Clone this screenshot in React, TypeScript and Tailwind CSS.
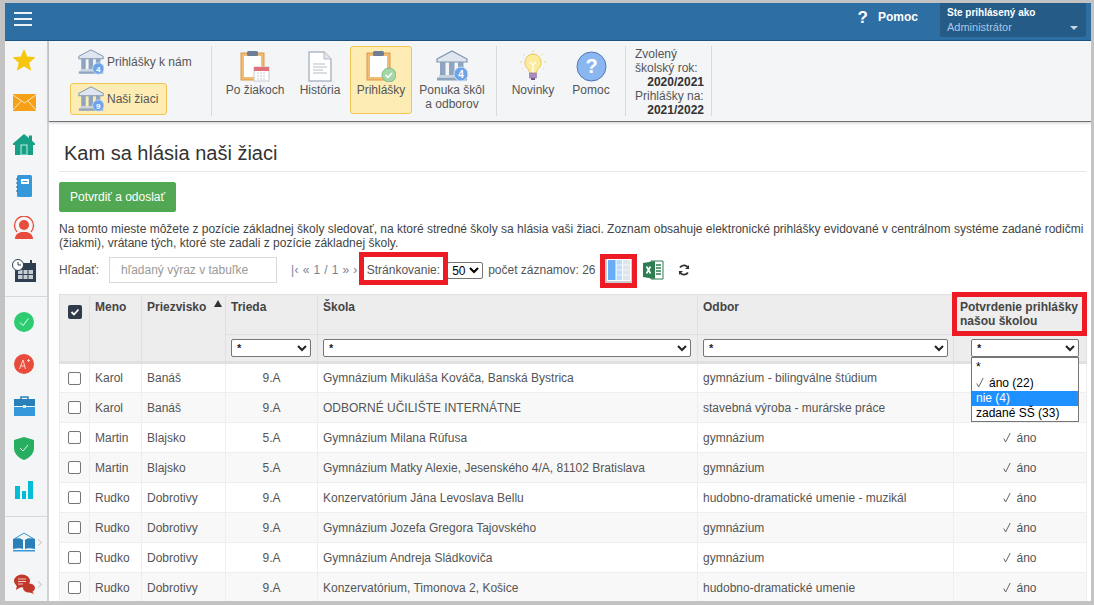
import type { ReactNode } from "react";

type Row = { first: string; last: string; cls: string; school: string; field: string };

const rows: Row[] = [
  { first: "Karol", last: "Banáš", cls: "9.A", school: "Gymnázium Mikuláša Kováča, Banská Bystrica", field: "gymnázium - bilingválne štúdium" },
  { first: "Karol", last: "Banáš", cls: "9.A", school: "ODBORNÉ UČILIŠTE INTERNÁTNE", field: "stavebná výroba - murárske práce" },
  { first: "Martin", last: "Blajsko", cls: "5.A", school: "Gymnázium Milana Rúfusa", field: "gymnázium" },
  { first: "Martin", last: "Blajsko", cls: "5.A", school: "Gymnázium Matky Alexie, Jesenského 4/A, 81102 Bratislava", field: "gymnázium" },
  { first: "Rudko", last: "Dobrotivy", cls: "9.A", school: "Konzervatórium Jána Levoslava Bellu", field: "hudobno-dramatické umenie - muzikál" },
  { first: "Rudko", last: "Dobrotivy", cls: "9.A", school: "Gymnázium Jozefa Gregora Tajovského", field: "gymnázium" },
  { first: "Rudko", last: "Dobrotivy", cls: "9.A", school: "Gymnázium Andreja Sládkoviča", field: "gymnázium" },
  { first: "Rudko", last: "Dobrotivy", cls: "9.A", school: "Konzervatórium, Timonova 2, Košice", field: "hudobno-dramatické umenie" },
];

function Bank({ badge, size = 26 }: { badge: string; size?: number }) {
  return (
    <svg width={size} height={size} viewBox="0 0 32 32">
      <path d="M1 9 16 1l15 8v3H1z" fill="#dfe6ef" stroke="#7f93ad" strokeWidth="1.200" />
      <rect x="4" y="12" width="5.500" height="13" fill="#8fa4bf" />
      <rect x="13" y="12" width="5.500" height="13" fill="#8fa4bf" />
      <rect x="22" y="12" width="5.500" height="13" fill="#8fa4bf" />
      <rect x="3" y="25" width="26" height="2" fill="#c7d2df" />
      <rect x="1" y="27.500" width="30" height="3" fill="#8fa4bf" />
      <circle cx="25" cy="24" r="7" fill="#6ea3e8" stroke="#cfe0f7" strokeWidth="1" />
      <text x="25" y="28" textAnchor="middle" fontSize="10" fontWeight="700" fill="#fff" fontFamily="Liberation Sans">
        {badge}
      </text>
    </svg>
  );
}

function Clipboard({ children }: { children: ReactNode }) {
  return (
    <svg width="30" height="32" viewBox="0 0 30 32">
      <rect x="1" y="3" width="23" height="27" fill="#f2bd72" stroke="#d99a4a" />
      <rect x="4" y="6" width="17" height="21" fill="#fff" />
      <rect x="7" y="1" width="11" height="5" rx="1.500" fill="#6d7f96" />
      {children}
    </svg>
  );
}

function Check() {
  return (
    <svg className="mr-[5px] inline-block align-[-1px]" width="8" height="11" viewBox="0 0 8 11">
      <path d="M.8 6.500 2.600 10 7.200 1" fill="none" stroke="#666" strokeWidth="1" />
    </svg>
  );
}

function SideIcon({ children }: { children: ReactNode }) {
  return <div className="flex h-8 items-center justify-center pr-[4px]">{children}</div>;
}

function RibbonItem({ icon, label, active, width }: { icon: ReactNode; label: ReactNode; active?: boolean; width: string }) {
  return (
    <div
      className={`flex h-[68px] flex-col items-center rounded-[3px] border pt-[3px] text-center leading-[14px] whitespace-nowrap ${width} ${
        active ? "border-[#f3c552] bg-[#fdedb4]" : "border-transparent"
      }`}
    >
      <div className="flex h-[32px] items-center justify-center">{icon}</div>
      <div className="mt-[1px]">{label}</div>
    </div>
  );
}

function FilterSelect({ width }: { width: string }) {
  return (
    <select className={`h-[18px] rounded-[2px] border border-[#767676] bg-white pl-[1px] text-[11px] leading-[14px] text-[#222] ${width}`}>
      <option>*</option>
    </select>
  );
}

export default function App() {
  return (
    <div className="h-[605px] w-[1094px] overflow-hidden bg-[#c3c3c3] pb-[4px] pl-[5px] pr-[3px] pt-[3px] font-['Liberation_Sans',Arial,sans-serif] text-[12px] text-[#555]">
      <div className="relative flex h-full flex-col overflow-hidden bg-white">
        <header className="flex h-[38px] shrink-0 items-start justify-between border-b border-[#1d5583] bg-[#2d6ea3]">
          <div className="mt-[9px] ml-[9px] flex w-[18px] flex-col gap-[4px]">
            <span className="h-[2px] bg-[#e9f1f8]" />
            <span className="h-[2px] bg-[#e9f1f8]" />
            <span className="h-[2px] bg-[#e9f1f8]" />
          </div>
          <div className="mr-[5px] flex items-start">
            <span className="mt-[5px] text-[17px] font-bold leading-[20px] text-white">?</span>
            <span className="ml-[10px] mt-[7px] mr-[22px] text-[12px] font-bold leading-[14px] text-white">Pomoc</span>
            <div className="relative h-[34px] w-[146px] rounded-b-[2px] bg-[#255c87] pl-[7px] pt-[3px]">
              <div className="text-[10px] font-bold leading-[13px] text-white">Ste prihlásený ako</div>
              <div className="mt-[2px] text-[11px] leading-[13px] text-[#a9c6e6]">Administrátor</div>
              <span className="absolute bottom-[7px] right-[8px] h-0 w-0 border-x-[4px] border-t-[4px] border-x-transparent border-t-[#c9d6e2]" />
            </div>
          </div>
        </header>

        <div className="flex min-h-0 flex-1">
          <aside className="flex w-[44px] shrink-0 flex-col border-r-2 border-[#d0d2d5] bg-[#f4f5f7] pt-[3px]">
            <div className="flex flex-col gap-[10px]">
              <SideIcon>
                <svg width="24" height="22" viewBox="0 0 24 22"><path d="M12 0l3.300 7.600 8.200.7-6.200 5.400 1.900 8L12 17.400 4.800 21.700l1.900-8L.5 8.300l8.200-.7z" fill="#f5c80f" /></svg>
              </SideIcon>
              <SideIcon>
                <svg width="23" height="17" viewBox="0 0 23 17"><rect width="23" height="17" fill="#f7a015" /><path d="M0 1l11.500 8L23 1M0 16l8-9M23 16l-8-9" fill="none" stroke="#fde6bd" strokeWidth="1" /></svg>
              </SideIcon>
              <SideIcon>
                <svg width="22" height="21" viewBox="0 0 22 21"><path d="M11 0l5 4V1.500h3v5.200L22 9.500V11h-2v10H2V11H0V9.500z" fill="#16a085" /><rect x="8" y="11" width="6" height="10" fill="none" stroke="#bfeee3" strokeWidth="1" /></svg>
              </SideIcon>
              <SideIcon>
                <svg width="16" height="22" viewBox="0 0 16 22"><rect x="1" width="15" height="22" rx="1.500" fill="#3498db" /><rect x="5" y="4" width="8" height="5" fill="#fff" /><rect x="6.500" y="6" width="5" height="1" fill="#3498db" /><path d="M0 4h2M0 8h2M0 12h2M0 16h2" stroke="#1f6da8" strokeWidth="1" /></svg>
              </SideIcon>
              <SideIcon>
                <svg width="22" height="24" viewBox="0 0 22 24"><path d="M4 16a9.500 9.500 0 1 1 14 0" fill="none" stroke="#e74c3c" strokeWidth="1.300" /><circle cx="11" cy="9" r="5" fill="#e74c3c" /><path d="M2 23c0-5 4-6 6-7h6c2 1 6 2 6 7z" fill="#e74c3c" /></svg>
              </SideIcon>
              <SideIcon>
                <svg width="24" height="23" viewBox="0 0 24 23"><rect x="3" y="4" width="21" height="19" fill="#2c3e50" /><rect x="6" y="11" width="15" height="9" fill="#c5ccd3" /><path d="M11 11v9M16 11v9M6 15.500h15" stroke="#2c3e50" /><circle cx="6" cy="6" r="5.500" fill="#fff" stroke="#2c3e50" /><path d="M6 3v3h3" fill="none" stroke="#2c3e50" /><rect x="18" y="1" width="2" height="5" fill="#2c3e50" /></svg>
              </SideIcon>
            </div>
            <div className="mb-[9px] mt-[10px] h-px bg-[#d6d8da]" />
            <div className="flex flex-col gap-[10px]">
              <SideIcon>
                <svg width="20" height="20" viewBox="0 0 20 20"><circle cx="10" cy="10" r="10" fill="#2ecc71" /><path d="M6 10.500l3 3 5.500-7" fill="none" stroke="#e6fff0" strokeWidth="1" /></svg>
              </SideIcon>
              <SideIcon>
                <svg width="20" height="20" viewBox="0 0 20 20"><circle cx="10" cy="10" r="10" fill="#e74c3c" /><path d="M5.500 15 9 6l2.500 9M6.800 12h4M13 6.500h3M14.500 5v3" fill="none" stroke="#fbd5d0" strokeWidth="1" /></svg>
              </SideIcon>
              <SideIcon>
                <svg width="21" height="20" viewBox="0 0 21 20"><path d="M7 3V1h7v2" fill="none" stroke="#2980b9" strokeWidth="1.500" /><rect y="3" width="21" height="7" fill="#2980b9" /><rect y="11" width="21" height="9" fill="#3498db" /><rect x="9" y="9" width="3" height="3" fill="#d7ecfa" /></svg>
              </SideIcon>
              <SideIcon>
                <svg width="20" height="23" viewBox="0 0 20 23"><path d="M10 0l10 3v8c0 6-5 10-10 12C5 21 0 17 0 11V3z" fill="#27ae60" /><path d="M6 11l3 3 5-6" fill="none" stroke="#dff7e9" strokeWidth="1" /></svg>
              </SideIcon>
              <SideIcon>
                <svg width="18" height="18" viewBox="0 0 18 18"><rect y="5" width="5" height="13" fill="#00bcd4" /><rect x="7" y="10" width="4" height="8" fill="#00bcd4" /><rect x="13" width="5" height="18" fill="#00bcd4" /></svg>
              </SideIcon>
            </div>
            <div className="mb-[9px] mt-[10px] h-px bg-[#d6d8da]" />
            <div className="flex flex-col gap-[10px]">
              <SideIcon>
                <div className="ml-[6px] flex items-center">
                  <svg width="22" height="20" viewBox="0 0 22 20"><path d="M1 7l10-6 10 6" fill="none" stroke="#3498db" strokeWidth="1" /><path d="M0 7c4-1 8-1 10 1v9c-2-1-6-1-10 0zM22 7c-4-1-8-1-10 1v9c2-1 6-1 10 0z" fill="#2980b9" /><rect y="18" width="22" height="1.500" fill="#3498db" /></svg>
                  <span className="ml-[1px] h-[5px] w-[5px] rotate-45 border-r border-t border-[#ccc]" />
                </div>
              </SideIcon>
              <SideIcon>
                <div className="ml-[6px] flex items-center">
                  <svg width="21" height="20" viewBox="0 0 21 20"><ellipse cx="8" cy="7" rx="8" ry="6.500" fill="#c0392b" /><path d="M3 11l-1 5 5-3z" fill="#c0392b" /><path d="M4 5h8M4 7.500h8M4 10h5" stroke="#f3c8c3" /><ellipse cx="15" cy="14" rx="6" ry="4.500" fill="#c0392b" /><path d="M18 17l2 3-5-2z" fill="#c0392b" /></svg>
                  <span className="ml-[1px] h-[5px] w-[5px] rotate-45 border-r border-t border-[#ccc]" />
                </div>
              </SideIcon>
            </div>
          </aside>

          <div className="flex min-w-0 flex-1 flex-col">
            <div className="flex h-[81px] shrink-0 items-start border-b border-[#6f7276] bg-[#f4f5f7] pt-[5px] shadow-[0_1px_3px_rgba(0,0,0,0.2)]">
              <div className="flex h-[70px] w-[163px] shrink-0 flex-col border-r border-[#d8dadd] pl-[21px]">
                <div className="mt-[1px] flex h-[30px] items-center gap-[3px] pl-[8px]">
                  <Bank badge="4" />
                  <span className="whitespace-nowrap">Prihlášky k nám</span>
                </div>
                <div className="mt-[6px] flex h-[32px] w-[97px] items-center gap-[3px] rounded-[3px] border border-[#f3c552] bg-[#fdedb4] pl-[7px]">
                  <Bank badge="9" />
                  <span className="whitespace-nowrap">Naši žiaci</span>
                </div>
              </div>
              <div className="flex h-[70px] w-[285px] shrink-0 items-start border-r border-[#d8dadd] pl-[10px]">
                <RibbonItem
                  width="w-[66px]"
                  label="Po žiakoch"
                  icon={
                    <Clipboard>
                      <rect x="14" y="17" width="15" height="14" fill="#fff" stroke="#c5ccd3" />
                      <rect x="14" y="17" width="15" height="4" fill="#e2707a" />
                      <path d="M17 23h9M17 26h9M17 29h9" stroke="#c5ccd3" strokeDasharray="2 1" />
                    </Clipboard>
                  }
                />
                <div className="w-[7px]" />
                <RibbonItem
                  width="w-[50px]"
                  label="História"
                  icon={
                    <svg width="24" height="31" viewBox="0 0 24 31">
                      <path d="M1 1h15l7 7v22H1z" fill="#fff" stroke="#aeb9c6" strokeWidth="1.500" />
                      <path d="M16 1v7h7" fill="#e4e8ed" stroke="#aeb9c6" />
                      <path d="M5 13h12M5 16h14M5 19h10M5 22h14" stroke="#b7c0ca" strokeWidth="1.200" />
                    </svg>
                  }
                />
                <div className="w-[5px]" />
                <RibbonItem
                  active
                  width="w-[62px]"
                  label="Prihlášky"
                  icon={
                    <Clipboard>
                      <circle cx="23" cy="25" r="7" fill="#a5d6a7" stroke="#7fbb87" />
                      <path d="M19.500 25l2.500 2.500 4-4.500" fill="none" stroke="#fff" strokeWidth="1.500" />
                    </Clipboard>
                  }
                />
                <RibbonItem
                  width="w-[80px]"
                  label={
                    <>
                      Ponuka škôl
                      <br />a odborov
                    </>
                  }
                  icon={<Bank badge="4" size={32} />}
                />
              </div>
              <div className="flex h-[70px] w-[129px] shrink-0 items-start border-r border-[#d8dadd] pl-[9px]">
                <RibbonItem
                  width="w-[54px]"
                  label="Novinky"
                  icon={
                    <svg width="26" height="32" viewBox="0 0 26 32">
                      <path d="M13 4a8.500 8.500 0 0 0-5 15c1 1 1.500 3 1.500 4h7c0-1 .5-3 1.500-4a8.500 8.500 0 0 0-5-15z" fill="#fdeb9c" stroke="#e8c85a" />
                      <path d="M10 12l3 3 3-3M13 15v8" fill="none" stroke="#fff" strokeWidth="1.200" />
                      <rect x="9.500" y="23" width="7" height="5" fill="#a98bc2" stroke="#7f6a96" strokeWidth=".5" />
                      <rect x="11" y="28" width="4" height="2" fill="#6d5c80" />
                      <path d="M13 0v2M3 4l1.500 1.500M23 4l-1.500 1.500M0 12h2M24 12h2M2 19l1-.5M24 19l-1-.5" stroke="#e8d48a" />
                    </svg>
                  }
                />
                <div className="w-[6px]" />
                <RibbonItem
                  width="w-[50px]"
                  label="Pomoc"
                  icon={
                    <svg width="31" height="31" viewBox="0 0 31 31">
                      <circle cx="15.500" cy="15.500" r="14.500" fill="#8ab7f0" stroke="#4f78b8" />
                      <text x="15.500" y="22" textAnchor="middle" fontSize="20" fontWeight="700" fill="#fff" fontFamily="Liberation Sans">?</text>
                    </svg>
                  }
                />
              </div>
              <div className="h-[70px] w-[86px] shrink-0 whitespace-nowrap border-r border-[#d8dadd] pl-[9px] pr-[7px] pt-[1px] leading-[14px]">
                <div>Zvolený</div>
                <div>školský rok:</div>
                <div className="text-right font-bold text-[#333]">2020/2021</div>
                <div>Prihlášky na:</div>
                <div className="text-right font-bold text-[#333]">2021/2022</div>
              </div>
            </div>

            <main className="min-h-0 flex-1 pl-[10px] pr-[5px]">
              <h1 className="ml-[5px] mt-[19px] h-[30px] text-[20px] font-normal leading-[24px] text-[#333]">Kam sa hlásia naši žiaci</h1>
              <div className="h-px bg-[#e7e7e7]" />
              <button className="mt-[10px] h-[30px] w-[117px] rounded-[2px] border border-[#4cae4c] bg-[#52a852] text-[12px] text-white">Potvrdiť a odoslať</button>
              <p className="mt-[10px] text-[12px] leading-[14px] text-[#444]">
                Na tomto mieste môžete z pozície základnej školy sledovať, na ktoré stredné školy sa hlásia vaši žiaci. Zoznam obsahuje elektronické prihlášky evidované v centrálnom systéme zadané rodičmi (žiakmi), vrátane tých, ktoré ste zadali z pozície základnej školy.
              </p>
              <div className="mt-[6px] flex h-[28px] items-center whitespace-nowrap">
                <span className="w-[50px]">Hľadať:</span>
                <input
                  readOnly
                  placeholder="hľadaný výraz v tabuľke"
                  className="h-[26px] w-[168px] border border-[#d9d9d9] bg-white pl-[11px] text-[12px] placeholder:text-[#9a9a9a]"
                />
                <span className="ml-[14px] tracking-[0.4px] text-[#7a7f9a]">|‹ « 1 / 1 » ›</span>
                <span className="ml-[9px]">Stránkovanie:</span>
                <select className="ml-[7px] h-[17px] w-[36px] rounded-[2px] border border-[#767676] bg-white text-[12px] text-black">
                  <option>50</option>
                </select>
                <span className="ml-[5px]">počet záznamov: 26</span>
                <div className="ml-[9px] flex h-[26px] w-[28px] items-center justify-center border-2 border-[#c9ced4] bg-white">
                  <svg width="22" height="20" viewBox="0 0 22 20">
                    <rect width="22" height="20" fill="#dfe5ea" />
                    <rect x="0" width="8" height="20" fill="#66adf5" />
                    <rect x="8" width="6" height="20" fill="#bcdcfb" />
                    <path d="M14.500 0v20M8 0v20" stroke="#fff" strokeWidth="1" />
                    <path d="M8 5h14M8 10h14M8 15h14" stroke="#fff" strokeWidth=".7" />
                  </svg>
                </div>
                <svg className="ml-[10px]" width="21" height="20" viewBox="0 0 21 20">
                  <path d="M8 1h12v18H8z" fill="#fff" stroke="#2e7d52" />
                  <path d="M13 5h5M13 8h5M13 11h5M13 14h5" stroke="#2e7d52" strokeWidth="1.500" />
                  <path d="M0 3l12-2v18L0 17z" fill="#2e7d52" />
                  <path d="M3.500 6.500l4 7M7.500 6.500l-4 7" stroke="#fff" strokeWidth="1.600" />
                </svg>
                <svg className="ml-[14px]" width="12" height="12" viewBox="0 0 24 24" fill="none" stroke="#333" strokeWidth="3.500">
                  <path d="M21 9a9.500 9.500 0 0 0-17-2M3 15a9.500 9.500 0 0 0 17 2" />
                  <path d="M22 2v8h-8zM2 22v-8h8z" fill="#333" stroke="none" />
                </svg>
              </div>

              <table className="mt-[10px] w-[1027px] table-fixed border-collapse">
                <colgroup>
                  <col className="w-[30px]" />
                  <col className="w-[52px]" />
                  <col className="w-[84px]" />
                  <col className="w-[92px]" />
                  <col className="w-[380px]" />
                  <col className="w-[256px]" />
                  <col className="w-[133px]" />
                </colgroup>
                <thead className="bg-[#ededed] font-bold leading-[14px] text-[#444]">
                  <tr className="h-[40px] align-top">
                    <th rowSpan={2} className="border border-[#e0e0e0] border-b-[3px] pt-[10px]">
                      <span className="mx-auto flex h-[14px] w-[14px] items-center justify-center rounded-[2px] bg-[#2f3a4a]">
                        <svg width="10" height="10" viewBox="0 0 10 10"><path d="M1.500 5l2.500 2.500 4.500-5" fill="none" stroke="#fff" strokeWidth="1.800" /></svg>
                      </span>
                    </th>
                    <th rowSpan={2} className="border border-[#e0e0e0] border-b-[3px] px-[5px] pt-[5px] text-left">Meno</th>
                    <th rowSpan={2} className="relative border border-[#e0e0e0] border-b-[3px] px-[5px] pt-[5px] text-left">
                      Priezvisko
                      <span className="absolute right-[3px] top-[5px] h-0 w-0 border-x-[4px] border-b-[7px] border-x-transparent border-b-[#333]" />
                    </th>
                    <th className="border border-[#e0e0e0] px-[5px] pt-[5px] text-left">Trieda</th>
                    <th className="border border-[#e0e0e0] px-[5px] pt-[5px] text-left">Škola</th>
                    <th className="border border-[#e0e0e0] px-[5px] pt-[5px] text-left">Odbor</th>
                    <th className="border border-[#e0e0e0] pl-[6px] pr-[4px] pt-[5px] text-left">
                      Potvrdenie prihlášky
                      <br />
                      našou školou
                    </th>
                  </tr>
                  <tr className="h-[28px]">
                    <th className="border border-[#e0e0e0] border-b-[3px] px-[5px] pb-[1px] text-left">
                      <FilterSelect width="w-[80px]" />
                    </th>
                    <th className="border border-[#e0e0e0] border-b-[3px] px-[5px] pb-[1px] text-left">
                      <FilterSelect width="w-[368px]" />
                    </th>
                    <th className="border border-[#e0e0e0] border-b-[3px] px-[5px] pb-[1px] text-left">
                      <FilterSelect width="w-[245px]" />
                    </th>
                    <th className="border border-[#e0e0e0] border-b-[3px] pb-[1px] pl-[17px] text-left">
                      <FilterSelect width="w-[108px]" />
                    </th>
                  </tr>
                </thead>
                <tbody>
                  {rows.map((row, i) => (
                    <tr key={i} className={`h-[30px] ${i % 2 ? "bg-[#f8f8f8]" : "bg-white"}`}>
                      <td className="border border-[#eeeeee] text-center">
                        <span className="mx-auto block h-[13px] w-[13px] rounded-[2px] border border-[#767676] bg-white" />
                      </td>
                      <td className="border border-[#eeeeee] px-[5px]">{row.first}</td>
                      <td className="border border-[#eeeeee] px-[5px]">{row.last}</td>
                      <td className="border border-[#eeeeee] px-[5px] text-center">{row.cls}</td>
                      <td className="border border-[#eeeeee] px-[5px]">{row.school}</td>
                      <td className="border border-[#eeeeee] px-[5px]">{row.field}</td>
                      <td className="border border-[#eeeeee] px-[5px] text-center">
                        {/* the open filter list covers the first two rows */}
                        {i > 1 && (
                          <>
                            <Check />
                            áno
                          </>
                        )}
                      </td>
                    </tr>
                  ))}
                </tbody>
              </table>
            </main>
          </div>
        </div>

        {/* dropdown and red annotations lie over the page */}
        <div className="absolute left-[966px] top-[354px] w-[108px] border border-[#767676] bg-white text-[12px] leading-[15px] text-black">
          <div className="h-[18px] px-[4px] pt-[2px]">*</div>
          <div className="px-[4px]">
            <Check />
            áno (22)
          </div>
          <div className="bg-[#1e90ff] px-[4px] text-white">nie (4)</div>
          <div className="px-[4px]">zadané SŠ (33)</div>
        </div>
        <div className="absolute left-[354px] top-[249px] h-[33px] w-[89px] border-[5px] border-[#ed1c24]" />
        <div className="absolute left-[595px] top-[251px] h-[34px] w-[37px] border-[5px] border-[#ed1c24]" />
        <div className="absolute left-[947px] top-[289px] h-[44px] w-[135px] border-[5px] border-[#ed1c24]" />
      </div>
    </div>
  );
}
